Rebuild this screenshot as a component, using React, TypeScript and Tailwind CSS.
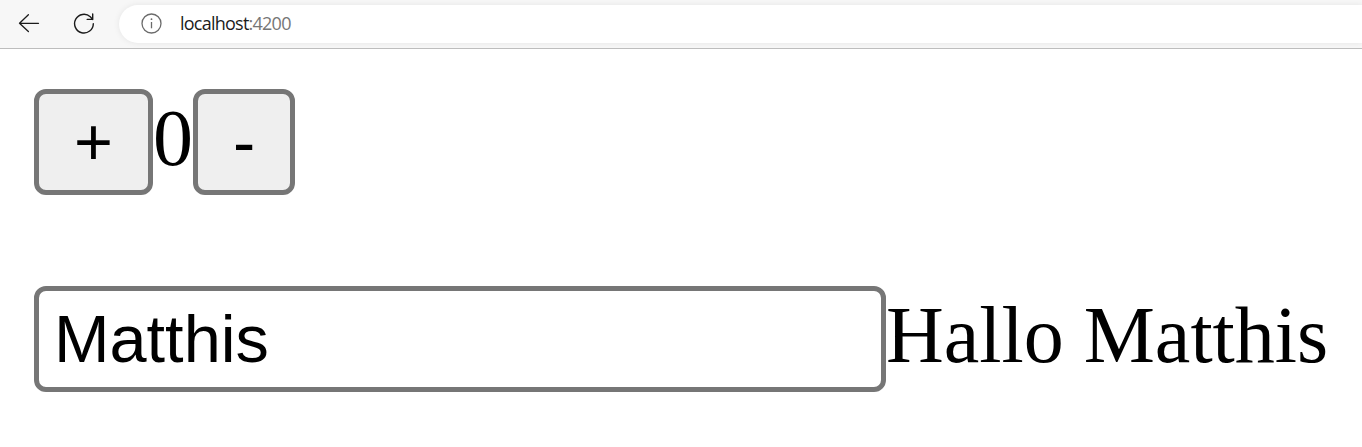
import { useState } from "react";

function BrowserBar() {
  return (
    <header className="flex h-[49px] items-start border-b border-[#bdbdbd] bg-[#f7f7f7]">
      <button aria-label="Back" className="mt-[13px] ml-[18px] h-5 w-[22px]">
        <svg width="22" height="20" viewBox="0 0 22 20" fill="none" stroke="#1b1b1b" strokeWidth="1.3" strokeLinecap="round" strokeLinejoin="round">
          <path d="M20.5 10.3H1.5M10.4 1.8L1.5 10.3L10.4 18.5" />
        </svg>
      </button>
      <button aria-label="Reload" className="mt-3 ml-[33px] h-[23px] w-[22px]">
        <svg width="22" height="23" viewBox="0 0 22 23" fill="none" stroke="#1b1b1b" strokeWidth="1.4" strokeLinecap="round" strokeLinejoin="round">
          <path d="M20.3 11.7A9.35 9.35 0 1 1 17.3 4.8L19.7 7.4M19.7 2V7.4H14.2" />
        </svg>
      </button>
      <div className="mt-[5px] ml-6 flex h-[38px] flex-1 items-start rounded-l-full bg-white pl-[22px] shadow-[0_0_6px_rgba(0,0,0,0.08)]">
        <svg className="mt-2" width="21" height="21" viewBox="0 0 21 21" fill="none" stroke="#6b6b6b" strokeWidth="1.3">
          <circle cx="10.5" cy="10.5" r="9.5" />
          <path d="M10.5 9V15.3" />
          <circle cx="10.5" cy="6.2" r="0.9" fill="#6b6b6b" stroke="none" />
        </svg>
        <span className="mt-1.5 ml-[18px] font-['Open_Sans',sans-serif] text-[18px] leading-6 tracking-[-0.76px] text-[#1b1b1b]">
          localhost<span className="text-[#767676]">:4200</span>
        </span>
      </div>
    </header>
  );
}

const buttonClass =
  "h-[106px] rounded-[12px] border-[5px] border-[#767676] bg-[#efefef] text-center font-['Liberation_Sans',sans-serif] text-[66.667px] leading-[76px]";

export default function App() {
  const [count, setCount] = useState(0);
  const [name, setName] = useState("Matthis");

  return (
    <div className="h-[447px] overflow-hidden bg-white text-black">
      <BrowserBar />
      <main className="pt-10 pl-[34px] font-['Liberation_Serif',serif] text-[80px] leading-[92px]">
        <div className="flex items-baseline">
          <button className={`${buttonClass} w-[119px]`} onClick={() => setCount(count + 1)}>
            +
          </button>
          <span>{count}</span>
          <button className={`${buttonClass} w-[102px]`} onClick={() => setCount(count - 1)}>
            -
          </button>
        </div>
        <div className="mt-[91px] flex items-baseline whitespace-nowrap">
          <input
            className="h-[106px] w-[852px] shrink-0 rounded-[12px] border-[5px] border-[#767676] bg-white px-[15px] font-['Liberation_Sans',sans-serif] text-[66.667px] outline-none"
            value={name}
            onChange={(event) => setName(event.target.value)}
            spellCheck={false}
          />
          <span>Hallo {name}</span>
        </div>
      </main>
    </div>
  );
}
